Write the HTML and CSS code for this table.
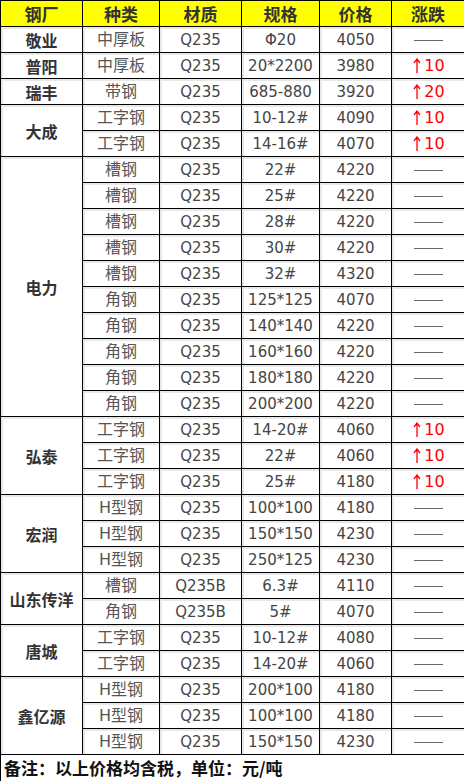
FILE: index.html
```html
<!DOCTYPE html>
<html lang="zh-CN">
<head>
<meta charset="utf-8">
<title>钢材价格</title>
<link rel="stylesheet" href="styles.css">
</head>
<body>
<table class="price">
  <colgroup>
    <col class="c1"><col class="c2"><col class="c3"><col class="c4"><col class="c5"><col class="c6">
  </colgroup>
  <thead>
    <tr class="head"><th>钢厂</th><th>种类</th><th>材质</th><th>规格</th><th>价格</th><th>涨跌</th></tr>
  </thead>
  <tbody>
    <tr><td class="co">敬业</td><td>中厚板</td><td>Q235</td><td>Φ20</td><td>4050</td><td><span class="dash"></span></td></tr>
    <tr><td class="co">普阳</td><td>中厚板</td><td>Q235</td><td>20*2200</td><td>3980</td><td class="up"><svg class="arr" viewBox="0 0 8 15" width="8" height="15"><path d="M4 15V1M1 5L4 1L7 5" fill="none" stroke="#ff0000" stroke-width="1.3"/></svg>10</td></tr>
    <tr><td class="co">瑞丰</td><td>带钢</td><td>Q235</td><td>685-880</td><td>3920</td><td class="up"><svg class="arr" viewBox="0 0 8 15" width="8" height="15"><path d="M4 15V1M1 5L4 1L7 5" fill="none" stroke="#ff0000" stroke-width="1.3"/></svg>20</td></tr>

    <tr><td class="co" rowspan="2">大成</td><td>工字钢</td><td>Q235</td><td>10-12#</td><td>4090</td><td class="up"><svg class="arr" viewBox="0 0 8 15" width="8" height="15"><path d="M4 15V1M1 5L4 1L7 5" fill="none" stroke="#ff0000" stroke-width="1.3"/></svg>10</td></tr>
    <tr><td>工字钢</td><td>Q235</td><td>14-16#</td><td>4070</td><td class="up"><svg class="arr" viewBox="0 0 8 15" width="8" height="15"><path d="M4 15V1M1 5L4 1L7 5" fill="none" stroke="#ff0000" stroke-width="1.3"/></svg>10</td></tr>

    <tr><td class="co" rowspan="10">电力</td><td>槽钢</td><td>Q235</td><td>22#</td><td>4220</td><td><span class="dash"></span></td></tr>
    <tr><td>槽钢</td><td>Q235</td><td>25#</td><td>4220</td><td><span class="dash"></span></td></tr>
    <tr><td>槽钢</td><td>Q235</td><td>28#</td><td>4220</td><td><span class="dash"></span></td></tr>
    <tr><td>槽钢</td><td>Q235</td><td>30#</td><td>4220</td><td><span class="dash"></span></td></tr>
    <tr><td>槽钢</td><td>Q235</td><td>32#</td><td>4320</td><td><span class="dash"></span></td></tr>
    <tr><td>角钢</td><td>Q235</td><td>125*125</td><td>4070</td><td><span class="dash"></span></td></tr>
    <tr><td>角钢</td><td>Q235</td><td>140*140</td><td>4220</td><td><span class="dash"></span></td></tr>
    <tr><td>角钢</td><td>Q235</td><td>160*160</td><td>4220</td><td><span class="dash"></span></td></tr>
    <tr><td>角钢</td><td>Q235</td><td>180*180</td><td>4220</td><td><span class="dash"></span></td></tr>
    <tr><td>角钢</td><td>Q235</td><td>200*200</td><td>4220</td><td><span class="dash"></span></td></tr>

    <tr><td class="co" rowspan="3">弘泰</td><td>工字钢</td><td>Q235</td><td>14-20#</td><td>4060</td><td class="up"><svg class="arr" viewBox="0 0 8 15" width="8" height="15"><path d="M4 15V1M1 5L4 1L7 5" fill="none" stroke="#ff0000" stroke-width="1.3"/></svg>10</td></tr>
    <tr><td>工字钢</td><td>Q235</td><td>22#</td><td>4060</td><td class="up"><svg class="arr" viewBox="0 0 8 15" width="8" height="15"><path d="M4 15V1M1 5L4 1L7 5" fill="none" stroke="#ff0000" stroke-width="1.3"/></svg>10</td></tr>
    <tr><td>工字钢</td><td>Q235</td><td>25#</td><td>4180</td><td class="up"><svg class="arr" viewBox="0 0 8 15" width="8" height="15"><path d="M4 15V1M1 5L4 1L7 5" fill="none" stroke="#ff0000" stroke-width="1.3"/></svg>10</td></tr>

    <tr><td class="co" rowspan="3">宏润</td><td>H型钢</td><td>Q235</td><td>100*100</td><td>4180</td><td><span class="dash"></span></td></tr>
    <tr><td>H型钢</td><td>Q235</td><td>150*150</td><td>4230</td><td><span class="dash"></span></td></tr>
    <tr><td>H型钢</td><td>Q235</td><td>250*125</td><td>4230</td><td><span class="dash"></span></td></tr>

    <tr><td class="co" rowspan="2">山东传洋</td><td>槽钢</td><td>Q235B</td><td>6.3#</td><td>4110</td><td><span class="dash"></span></td></tr>
    <tr><td>角钢</td><td>Q235B</td><td>5#</td><td>4070</td><td><span class="dash"></span></td></tr>

    <tr><td class="co" rowspan="2">唐城</td><td>工字钢</td><td>Q235</td><td>10-12#</td><td>4080</td><td><span class="dash"></span></td></tr>
    <tr><td>工字钢</td><td>Q235</td><td>14-20#</td><td>4060</td><td><span class="dash"></span></td></tr>

    <tr><td class="co" rowspan="3">鑫亿源</td><td>H型钢</td><td>Q235</td><td>200*100</td><td>4180</td><td><span class="dash"></span></td></tr>
    <tr><td>H型钢</td><td>Q235</td><td>100*100</td><td>4180</td><td><span class="dash"></span></td></tr>
    <tr><td>H型钢</td><td>Q235</td><td>150*150</td><td>4230</td><td><span class="dash"></span></td></tr>
  </tbody>
  <tfoot>
    <tr class="note"><td colspan="6">备注：以上价格均含税，单位：元/吨</td></tr>
  </tfoot>
</table>
</body>
</html>
```

FILE: styles.css
```css
html, body {
  margin: 0;
  padding: 0;
  background: #ffffff;
}

.price {
  width: 464px;
  border-collapse: collapse;
  table-layout: fixed;
  font-family: "DejaVu Sans", "Noto Sans CJK SC", sans-serif;
  color: #454545;
}

.c1 { width: 82px; }
.c2 { width: 77px; }
.c3 { width: 82px; }
.c4 { width: 78px; }
.c5 { width: 72px; }
.c6 { width: 73px; }

.price th,
.price td {
  border: 1px solid #000000;
  padding: 0;
  text-align: center;
  vertical-align: middle;
  white-space: nowrap;
  line-height: 20px;
}

.price tr {
  height: 26px;
}

.head th {
  background: #ffff00;
  color: #333333;
  font-weight: bold;
  font-size: 17px;
  font-family: "Noto Sans CJK SC", sans-serif;
}

.price tbody td {
  font-size: 15px;
  box-shadow: inset 2px 2px 0 #e8e8e8;
}

.price tbody td:nth-last-child(5) {
  font-size: 16px;
  color: #555555;
}

.price tbody td.co {
  font-family: "Noto Sans CJK SC", sans-serif;
  font-weight: bold;
  font-size: 16px;
  color: #333333;
}

.price tbody td.up {
  color: #ff0000;
  font-size: 16px;
  padding-left: 2px;
}

.arr {
  display: inline-block;
  vertical-align: -2px;
  margin-right: 3px;
}

.dash {
  display: inline-block;
  width: 29px;
  height: 1px;
  background: #666666;
  vertical-align: middle;
}

.note td {
  text-align: left;
  padding-left: 3px;
  font-family: "Noto Sans CJK SC", sans-serif;
  font-weight: bold;
  font-size: 17px;
  color: #111111;
  height: 26px;
}
```
